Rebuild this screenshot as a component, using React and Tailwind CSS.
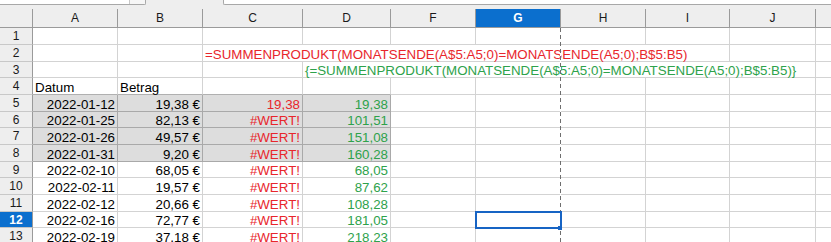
import React from 'react';

const COLS = ['A', 'B', 'C', 'D', 'F', 'G', 'H', 'I', 'J'];

const DATA = [
  ['2022-01-12', '19,38 €', '19,38', '19,38'],
  ['2022-01-25', '82,13 €', '#WERT!', '101,51'],
  ['2022-01-26', '49,57 €', '#WERT!', '151,08'],
  ['2022-01-31', '9,20 €', '#WERT!', '160,28'],
  ['2022-02-10', '68,05 €', '#WERT!', '68,05'],
  ['2022-02-11', '19,57 €', '#WERT!', '87,62'],
  ['2022-02-12', '20,66 €', '#WERT!', '108,28'],
  ['2022-02-16', '72,77 €', '#WERT!', '181,05'],
  ['2022-02-19', '37,18 €', '#WERT!', '218,23'],
];

const cellBase =
  'flex items-end whitespace-nowrap px-[2px] text-[13.33px] leading-[13px] border-r border-b min-w-0';
const white = 'bg-white border-[#d3d3d3]';
const grey = 'bg-[#dddddd] border-[#a9a9a9]';

function RowHead({ n, active }) {
  return (
    <div
      className={
        'flex items-center justify-center text-[12px] border-r border-b ' +
        (active
          ? 'bg-[#0b6fce] text-white font-bold border-r-[#9a9a9a] border-b-[#c4c4c4]'
          : 'bg-[#eeeeee] text-[#1a1a1a] border-r-[#9a9a9a] border-b-[#c8c8c8]')
      }
    >
      {n}
    </div>
  );
}

function Empty({ className = '' }) {
  return <div className={cellBase + ' ' + white + ' ' + className} />;
}

export default function App() {
  return (
    <div className="w-[831px] h-[242px] overflow-hidden bg-[#eeeeee] font-['Liberation_Sans',Arial,sans-serif] text-black">
      {/* toolbar remnant */}
      <div className="h-[9px] flex items-start">
        <div className="w-[146px] h-[5px] bg-white border-b border-r border-[#a8a8a8] rounded-br-[2px] flex justify-end">
          <div className="w-[16px] h-[4px] border-l border-[#c8c8c8] bg-[#f6f6f6]" />
        </div>
        <div className="ml-[77px] flex-1 h-[5px] bg-white border-b border-l border-[#a8a8a8] rounded-bl-[2px]" />
      </div>

      <div className="relative">
        <div className="grid grid-cols-[33px_85px_85px_100px_88px_85px_85px_85px_84px_86px_1fr] grid-rows-[19px_17px_17px_16px_17px_17px_16px_17px_17px_16px_17px_17px_16px_17px]">
          {/* header row */}
          <div className="bg-[#eeeeee] border-r border-b border-[#9a9a9a]" />
          {COLS.map((c) => (
            <div
              key={c}
              className={
                'flex items-center justify-center text-[12px] border-r border-b ' +
                (c === 'G'
                  ? 'bg-[#0b6fce] text-white font-bold border-[#9a9a9a]'
                  : 'bg-[#eeeeee] text-[#1a1a1a] border-[#9a9a9a]')
              }
            >
              {c}
            </div>
          ))}
          <div className="bg-[#eeeeee] border-b border-[#9a9a9a]" />

          {/* row 1 */}
          <RowHead n={1} />
          {COLS.map((c) => (
            <Empty key={c} />
          ))}
          <Empty className="border-r-0" />

          {/* row 2 */}
          <RowHead n={2} />
          <Empty />
          <Empty />
          <div className={cellBase + ' ' + white + ' col-span-6 text-[#e8262c]'}>
            =SUMMENPRODUKT(MONATSENDE(A$5:A5;0)=MONATSENDE(A5;0);B$5:B5)
          </div>
          <Empty />
          <Empty className="border-r-0" />

          {/* row 3 */}
          <RowHead n={3} />
          <Empty />
          <Empty />
          <Empty />
          <div className={cellBase + ' ' + white + ' col-span-6 text-[#2ea24b]'}>
            {'{=SUMMENPRODUKT(MONATSENDE(A$5:A5;0)=MONATSENDE(A5;0);B$5:B5)}'}
          </div>
          <Empty className="border-r-0" />

          {/* row 4 */}
          <RowHead n={4} />
          <div className={cellBase + ' ' + white + ' border-b-[#b0b0b0]'}>Datum</div>
          <div className={cellBase + ' ' + white + ' border-b-[#b0b0b0]'}>Betrag</div>
          <Empty className="border-b-[#b0b0b0]" />
          <Empty className="border-b-[#b0b0b0]" />
          <Empty />
          <Empty />
          <Empty />
          <Empty />
          <Empty />
          <Empty className="border-r-0" />

          {/* data rows */}
          {DATA.map((r, i) => {
            const n = i + 5;
            const g = n <= 8 ? grey : white;
            return (
              <React.Fragment key={n}>
                <RowHead n={n} active={n === 12} />
                <div className={cellBase + ' ' + g + ' justify-end'}>{r[0]}</div>
                <div className={cellBase + ' ' + g + ' justify-end'}>{r[1]}</div>
                <div className={cellBase + ' ' + g + ' justify-end text-[#e8262c]'}>{r[2]}</div>
                <div className={cellBase + ' ' + g + ' justify-end text-[#2ea24b]'}>{r[3]}</div>
                <Empty />
                <Empty />
                <Empty />
                <Empty />
                <Empty />
                <Empty className="border-r-0" />
              </React.Fragment>
            );
          })}
        </div>

        {/* page break line */}
        <div className="absolute left-[560px] top-[19px] bottom-0 w-px bg-[repeating-linear-gradient(to_bottom,#6e6e6e_0px,#6e6e6e_4px,#ffffff_4px,#ffffff_7px)]" />

        {/* cell cursor G12 */}
        <div className="absolute left-[475px] top-[202px] w-[87px] h-[18px] border-2 border-[#1764c4]" />
        <div className="absolute left-[558px] top-[217px] w-[4px] h-[4px] bg-[#1764c4]" />
      </div>
    </div>
  );
}
